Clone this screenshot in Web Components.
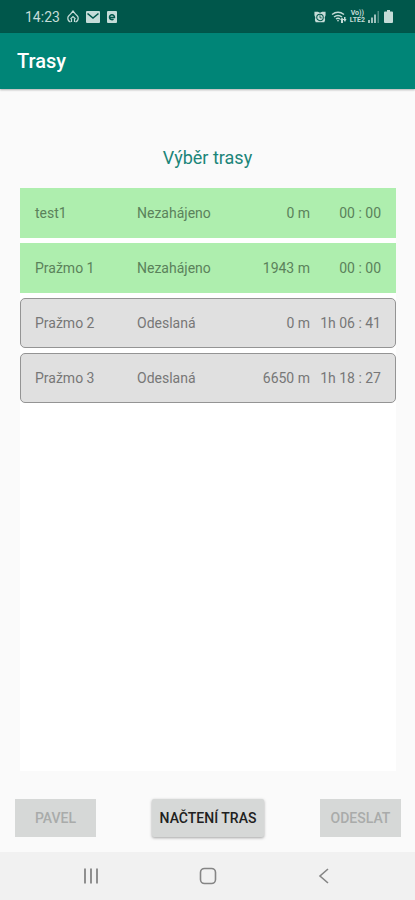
<!DOCTYPE html>
<html lang="cs">
<head>
<meta charset="utf-8">
<meta name="viewport" content="width=device-width, initial-scale=1">
<title>Trasy</title>
<style>
  html, body { height: 100%; }
  body { margin: 0; background: #fafafa; font-family: Roboto, "Noto Sans", sans-serif; }
</style>
</head>
<body>
<routes-app></routes-app>
<script>
const define = (name, html) => {
  const template = document.createElement('template');
  template.innerHTML = html;
  customElements.define(name, class extends HTMLElement {
    constructor() {
      super();
      this.attachShadow({ mode: 'open' }).append(template.content.cloneNode(true));
    }
  });
};

define('status-bar', `
  <style>
    :host { display: flex; align-items: center; justify-content: space-between; height: 33px;
      padding: 0 22px 0 25px; box-sizing: border-box; background: #00574b; color: #c5dcd8; font-size: 14px; }
    div { display: flex; align-items: center; }
    .left { gap: 7px; }
    .right { gap: 3px; }
    svg { display: block; fill: none; stroke: currentColor; }
    .full { fill: currentColor; stroke: none; }
    .cut { fill: none; stroke: #00574b; }
    .lte { display: grid; font-size: 7px; line-height: 7px; font-weight: 700; text-align: center; }
  </style>
  <div class="left">
    <time>14:23</time>
    <svg width="12" height="13" viewBox="0 0 12 13" stroke-width="1.2" aria-hidden="true">
      <path d="M3.500 12C1.800 11.500 .8 10 .8 8 .8 6 2.500 5.500 3.500 4L6 1 8.500 4C9.500 5.500 11.200 6 11.200 8 11.200 10 10.200 11.500 8.500 12M3.500 9 6 6.500 8.500 9M4.500 12V9M7.500 12V9"/></svg>
    <svg width="14" height="12" viewBox="0 0 14 12" aria-hidden="true">
      <rect class="full" width="14" height="12" rx="1"/><path class="cut" d="M1.500 2.500 7 7l5.500-4.500" stroke-width="1.600"/></svg>
    <svg width="10" height="12" viewBox="0 0 10 12" aria-hidden="true">
      <rect class="full" width="10" height="12" rx="1"/><path class="cut" d="M2.500 6.500h5A2.500 2.500 0 1 0 6.500 8.200" stroke-width="1.500"/></svg>
  </div>
  <div class="right">
    <svg width="12" height="12" viewBox="0 0 14 14" aria-hidden="true">
      <path class="full" d="M.500 1h4L7 2l2.500-1h4v4l-1 2.500 .5 3-1 2.500H2l-1-2.500 .5-3L.500 5z"/>
      <circle class="cut" cx="7" cy="7.500" r="3.800" stroke-width="1.200"/><path class="cut" d="M7 5v3h2"/></svg>
    <svg width="16" height="14" viewBox="0 0 16 14" stroke-width="1.500" aria-hidden="true" style="margin-left:2px">
      <path d="M1 4.500Q7 0 13 4.500M3 7Q7 4 11 7M5 9Q7 7.500 9 9"/><path class="full" d="M6 10h2l-1 2zM9 10l2-2.500L13 10h-1v3h-2v-3zM12 9h1V7h1.500v2h1L14 12z"/></svg>
    <span class="lte"><span>Vo))</span><span>LTE2</span></span>
    <svg class="full" width="12" height="13" viewBox="0 0 12 13" aria-hidden="true">
      <path d="M0 10h2v3H0zM3 7.500h2V13H3zM6 4.500h2V13H6z" opacity=".8"/><path d="M9.500 1h1.500v12H9.500z" opacity=".4"/></svg>
    <svg class="full" width="9" height="13" viewBox="0 0 9 13" aria-hidden="true" style="margin-left:1px">
      <path d="M3 0h3v1.500h2a1 1 0 0 1 1 1V12a1 1 0 0 1-1 1H1a1 1 0 0 1-1-1V2.500a1 1 0 0 1 1-1h2z"/></svg>
  </div>`);

define('app-bar', `
  <style>
    :host { display: flex; align-items: center; height: 56px; padding: 0 17px; background: #008577;
      color: #fff; box-shadow: 0 1px 2px rgba(0,0,0,.3); }
    h1 { margin: 0; font-size: 20px; line-height: 24px; font-weight: 500; }
  </style>
  <h1><slot></slot></h1>`);

customElements.define('route-table', class extends HTMLElement {
  constructor() {
    super();
    const rows = [
      ['test1', 'Nezahájeno', '0 m', '00 : 00'],
      ['Pražmo 1', 'Nezahájeno', '1943 m', '00 : 00'],
      ['Pražmo 2', 'Odeslaná', '0 m', '1h 06 : 41'],
      ['Pražmo 3', 'Odeslaná', '6650 m', '1h 18 : 27'],
    ];
    this.attachShadow({ mode: 'open' }).innerHTML = `
      <style>
        :host { display: block; background: #fff; }
        table, tbody { display: grid; gap: 5px; }
        tr { display: grid; grid-template-columns: 102px 1fr 1fr 71px; align-items: center; height: 50px;
          box-sizing: border-box; padding: 0 14px; border: 1px solid #aeeeae; background: #aeeeae;
          color: #5b825b; font-size: 14px; line-height: 20px; }
        tr.sent { border-color: #949494; border-radius: 5px; background: #e0e0e0; color: #777; }
        td { padding: 0; white-space: nowrap; }
        td:nth-child(n+3) { text-align: right; }
      </style>
      <table aria-label="Výběr trasy"><tbody>${rows.map(r =>
        `<tr class="${r[1] === 'Odeslaná' ? 'sent' : 'new'}">${r.map(c => `<td>${c}</td>`).join('')}</tr>`).join('')}
      </tbody></table>`;
  }
});

customElements.define('action-button', class extends HTMLElement {
  constructor() {
    super();
    this.attachShadow({ mode: 'open' }).innerHTML = `
      <style>
        :host { display: block; }
        button { min-width: 81px; height: 38px; padding: 0 8px; border: 0; border-radius: 2px;
          background: #d6d8d7; color: #202020; font: 500 14px/20px Roboto, sans-serif;
          box-shadow: 0 1px 3px rgba(0,0,0,.35); white-space: nowrap; }
        button:disabled { color: #a9abaa; box-shadow: none; border-radius: 0; }
      </style>
      <button type="button"><slot></slot></button>`;
    this.shadowRoot.querySelector('button').disabled = this.hasAttribute('disabled');
  }
});

define('nav-bar', `
  <style>
    :host { display: grid; grid-template-columns: 1fr 1fr 1fr; align-items: center; justify-items: center;
      height: 48px; padding: 0 32px; background: #f1f1f1; }
    button { display: block; padding: 8px; border: 0; background: none; color: #858585; }
    svg { display: block; fill: none; stroke: currentColor; }
  </style>
  <button type="button" aria-label="Poslední aplikace"><svg width="18" height="18" viewBox="0 0 18 18" stroke-width="1.800"><path d="M3 1.500v15M9 1.500v15M15 1.500v15"/></svg></button>
  <button type="button" aria-label="Domů"><svg width="18" height="18" viewBox="0 0 18 18" stroke-width="1.600"><rect x="1.500" y="1.500" width="15" height="15" rx="4"/></svg></button>
  <button type="button" aria-label="Zpět"><svg width="18" height="18" viewBox="0 0 18 18" stroke-width="1.600"><path d="M12 2 4 9l8 7"/></svg></button>`);

define('routes-app', `
  <style>
    :host { display: flex; flex-direction: column; min-height: 100vh; }
    main { flex: 1; display: flex; flex-direction: column; padding-top: 57px; }
    h2 { margin: 0 0 18px; text-align: center; color: #1b8579; font-size: 18px; line-height: 24px; font-weight: 400; }
    route-table { flex: 1; margin: 0 19px 0 20px; }
    footer { display: flex; justify-content: space-between; padding: 28px 14px 15px 15px; }
  </style>
  <status-bar></status-bar>
  <app-bar>Trasy</app-bar>
  <main>
    <h2>Výběr trasy</h2>
    <route-table></route-table>
    <footer>
      <action-button disabled>PAVEL</action-button>
      <action-button>NAČTENÍ TRAS</action-button>
      <action-button disabled>ODESLAT</action-button>
    </footer>
  </main>
  <nav-bar></nav-bar>`);
</script>
</body>
</html>
